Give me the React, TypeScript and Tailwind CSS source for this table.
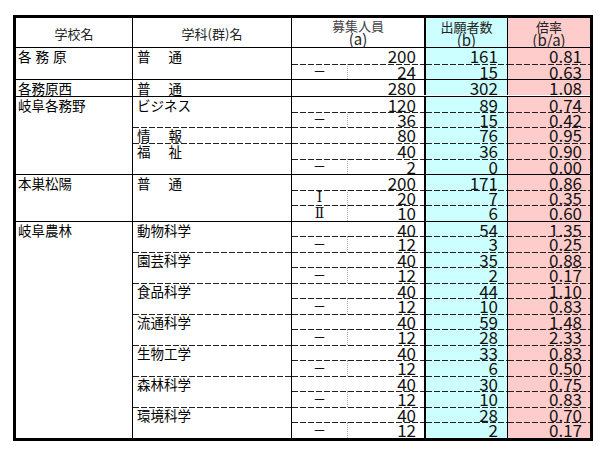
import React from "react";

type Row = { t?: string; a: string; b: string; r: string };
type Dept = { name: string[]; rows: Row[] };
type School = { name: string[]; spaced?: boolean; depts: Dept[] };

const SOLID = "border-t-[1.5px] border-t-black";
const DASH =
  "[background-image:repeating-linear-gradient(90deg,#222_0px,#222_6px,transparent_6px,transparent_8px)] [background-size:100%_1.3px] [background-repeat:no-repeat]";

const dash = (a: string, b: string, r: string): Row => ({ t: "－", a, b, r });

const schools: School[] = [
  {
    name: ["各", "務", "原"],
    spaced: true,
    depts: [
      {
        name: ["普", "通"],
        rows: [{ a: "200", b: "161", r: "0.81" }, dash("24", "15", "0.63")],
      },
    ],
  },
  {
    name: ["各務原西"],
    depts: [{ name: ["普", "通"], rows: [{ a: "280", b: "302", r: "1.08" }] }],
  },
  {
    name: ["岐阜各務野"],
    depts: [
      {
        name: ["ビジネス"],
        rows: [{ a: "120", b: "89", r: "0.74" }, dash("36", "15", "0.42")],
      },
      { name: ["情", "報"], rows: [{ a: "80", b: "76", r: "0.95" }] },
      {
        name: ["福", "祉"],
        rows: [{ a: "40", b: "36", r: "0.90" }, dash("2", "0", "0.00")],
      },
    ],
  },
  {
    name: ["本巣松陽"],
    depts: [
      {
        name: ["普", "通"],
        rows: [
          { a: "200", b: "171", r: "0.86" },
          { t: "Ⅰ", a: "20", b: "7", r: "0.35" },
          { t: "Ⅱ", a: "10", b: "6", r: "0.60" },
        ],
      },
    ],
  },
  {
    name: ["岐阜農林"],
    depts: [
      { name: ["動物科学"], rows: [{ a: "40", b: "54", r: "1.35" }, dash("12", "3", "0.25")] },
      { name: ["園芸科学"], rows: [{ a: "40", b: "35", r: "0.88" }, dash("12", "2", "0.17")] },
      { name: ["食品科学"], rows: [{ a: "40", b: "44", r: "1.10" }, dash("12", "10", "0.83")] },
      { name: ["流通科学"], rows: [{ a: "40", b: "59", r: "1.48" }, dash("12", "28", "2.33")] },
      { name: ["生物工学"], rows: [{ a: "40", b: "33", r: "0.83" }, dash("12", "6", "0.50")] },
      { name: ["森林科学"], rows: [{ a: "40", b: "30", r: "0.75" }, dash("12", "10", "0.83")] },
      { name: ["環境科学"], rows: [{ a: "40", b: "28", r: "0.70" }, dash("12", "2", "0.17")] },
    ],
  },
];

function Name({ parts, gap }: { parts: string[]; gap: string }) {
  return (
    <div className={`flex ${gap}`}>
      {parts.map((p, i) => (
        <span key={i}>{p}</span>
      ))}
    </div>
  );
}

export default function App() {
  return (
    <div className="w-[600px] h-[455px] bg-white pt-[15px] pl-[13px] font-['Noto_Sans_CJK_JP','Noto_Sans',sans-serif] text-black">
      <div className="w-[580px] border-[3px] border-black">
        {/* header */}
        <div className="flex h-[30px] border-b-[1.5px] border-black text-[13px] leading-[13px] text-[#222]">
          <div className="w-[117px] border-r-[1.5px] border-black flex items-center justify-center pt-[2px]">
            学校名
          </div>
          <div className="w-[159px] border-r-[1.5px] border-black flex items-center justify-center pt-[2px]">
            学科(群)名
          </div>
          <div className="w-[134px] border-r-[2px] border-black flex flex-col items-center justify-center">
            <span className="text-[#444]">募集人員</span>
            <span className="text-[15px] leading-[14px]">(a)</span>
          </div>
          <div className="w-[82px] border-r-[1.5px] border-black bg-[#ccffff] flex flex-col items-center justify-center pt-[2px]">
            <span>出願者数</span>
            <span className="text-[15px] leading-[14px]">(b)</span>
          </div>
          <div className="w-[82px] bg-[#ffcccc] flex flex-col items-center justify-center pt-[2px]">
            <span>倍率</span>
            <span className="text-[15px] leading-[14px]">(b/a)</span>
          </div>
        </div>
        {/* body */}
        {schools.map((s, si) => (
          <div key={si} className="flex">
            <div
              className={`w-[117px] border-r-[1.5px] border-black pl-[2px] text-[13.5px] leading-[16px] ${
                si > 0 ? SOLID : ""
              }`}
            >
              <Name parts={s.name} gap={s.spaced ? "gap-[4px]" : "gap-0"} />
            </div>
            <div className="flex flex-col">
              {s.depts.map((d, di) => {
                const deptTop = di > 0 ? DASH : si > 0 ? SOLID : "";
                return (
                  <div key={di} className="flex">
                    <div
                      className={`w-[159px] border-r-[1.5px] border-black pl-[4px] text-[13.5px] leading-[16px] ${deptTop}`}
                    >
                      <Name parts={d.name} gap="gap-[18px]" />
                    </div>
                    <div className="flex flex-col">
                      {d.rows.map((r, ri) => {
                        const top = ri > 0 ? DASH : deptTop;
                        return (
                          <div key={ri} className="flex h-[15.5px] text-[17px] leading-[16px] text-[#111]">
                            <div
                              className={`w-[134px] h-[15.5px] flex border-r-[2px] border-black ${top}`}
                            >
                              {r.t ? (
                                <>
                                  <div
                                    className={`w-[55px] flex items-center justify-center leading-[14px] ${
                                      r.t === "－"
                                        ? "text-[13px]"
                                        : "text-[14px] font-['DejaVu_Serif','Liberation_Serif',serif]"
                                    }`}
                                  >
                                    {r.t}
                                  </div>
                                  <div className="flex-1 text-right pr-[8px] border-l border-dotted border-[#aaa]">
                                    {r.a}
                                  </div>
                                </>
                              ) : (
                                <div className="flex-1 text-right pr-[8px]">{r.a}</div>
                              )}
                            </div>
                            <div
                              className={`w-[82px] h-[15.5px] bg-[#ccffff] border-r-[1.5px] border-black text-right pr-[9px] ${top}`}
                            >
                              {r.b}
                            </div>
                            <div
                              className={`w-[82px] h-[15.5px] bg-[#ffcccc] text-right pr-[8px] ${top}`}
                            >
                              {r.r}
                            </div>
                          </div>
                        );
                      })}
                    </div>
                  </div>
                );
              })}
            </div>
          </div>
        ))}
      </div>
    </div>
  );
}
